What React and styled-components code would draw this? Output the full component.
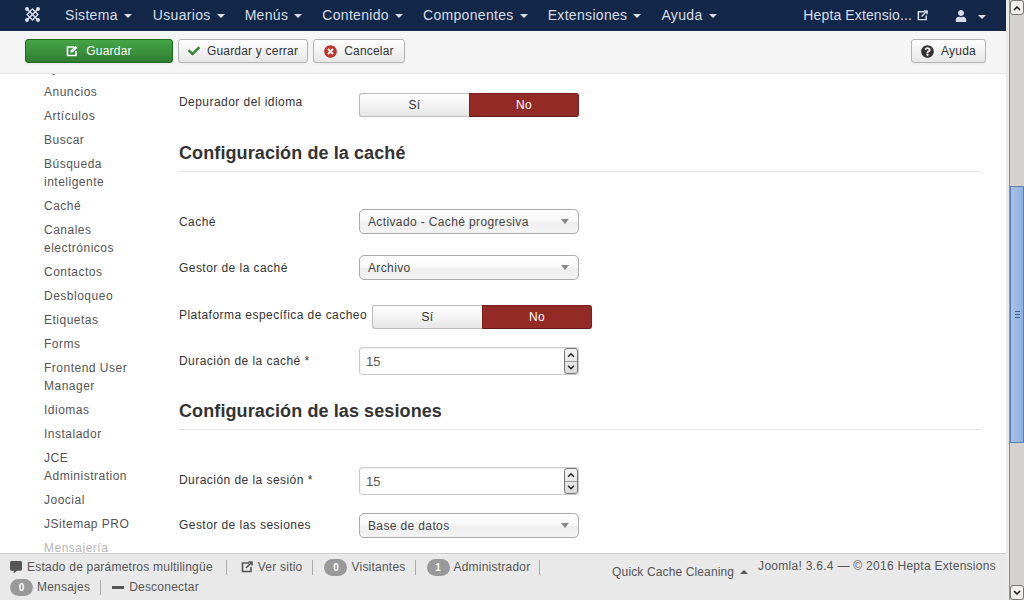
import React from 'react'
import styled, { createGlobalStyle } from 'styled-components'
import { FaCheck, FaTimesCircle, FaQuestionCircle, FaUser, FaCommentAlt } from 'react-icons/fa'

const GlobalStyle = createGlobalStyle`
  html, body { margin: 0; padding: 0; height: 100%; overflow: hidden; }
  body { font-family: "Liberation Sans", Arial, sans-serif; font-size: 12px; color: #333; }
`

const Frame = styled.div`
  display: flex;
  width: 1024px;
  height: 600px;
`

const Main = styled.div`
  flex: 1;
  min-width: 0;
  display: flex;
  flex-direction: column;
`

const NavBar = styled.div`
  height: 31px;
  flex: none;
  background: #132849;
  display: flex;
  align-items: center;
  color: #d9dee6;
  font-size: 14px;
  padding-left: 24px;
  padding-right: 20px;
`

const Logo = styled.svg`
  width: 17px;
  height: 17px;
  margin-right: 24px;
  margin-bottom: 3px;
`

const NavItem = styled.div`
  display: flex;
  align-items: center;
  margin-right: 20px;
  white-space: nowrap;
  letter-spacing: 0.32px;
  margin-bottom: 1px;
  &:first-of-type { margin-right: 21px; }
`

const Caret = styled.span`
  display: inline-block;
  width: 0;
  height: 0;
  margin-left: 6px;
  margin-top: 2px;
  border-left: 4px solid transparent;
  border-right: 4px solid transparent;
  border-top: 4px solid #d9dee6;
`

const NavRight = styled.div`
  margin-left: auto;
  display: flex;
  align-items: center;
`

const ExternalItem = styled(NavItem)`
  letter-spacing: 0.12px;
  gap: 5px;
  &:first-of-type { margin-right: 27px; }
`

const UserCaret = styled(Caret)`
  margin-left: 11px;
`

const ToolBar = styled.div`
  height: 43px;
  box-sizing: border-box;
  flex: none;
  background: #f5f5f5;
  border-bottom: 1px solid #e3e3e3;
  display: flex;
  align-items: center;
  padding: 0 20px 2px 25px;
  gap: 5px;
`

const ToolButton = styled.div`
  display: flex;
  align-items: center;
  justify-content: center;
  gap: 7px;
  width: ${p => p.$width}px;
  box-sizing: border-box;
  height: 24px;
  border-radius: 3px;
  font-size: 12px;
  letter-spacing: 0.2px;
  white-space: nowrap;
  color: #333;
  border: 1px solid #b3b3b3;
  background: linear-gradient(#ffffff, #e6e6e6);
  box-shadow: 0 1px 2px rgba(0, 0, 0, 0.05);
  ${p => p.$primary && `
    color: #fff;
    border-color: #1d6a20;
    background: linear-gradient(#46a546, #2f7d32);
  `}
  ${p => p.$right && 'margin-left: auto;'}
`

const Content = styled.div`
  flex: 1;
  min-height: 0;
  overflow: hidden;
  background: #fff;
  display: flex;
`

const SideMenu = styled.ul`
  list-style: none;
  margin: -18px 0 0;
  padding: 0 0 0 44px;
  width: 135px;
  flex: none;
  box-sizing: border-box;
`

const SideItem = styled.li`
  width: 96px;
  padding: 3px 0;
  line-height: 18px;
  font-size: 12px;
  letter-spacing: 0.5px;
  color: ${p => (p.$muted ? '#b5b5b5' : '#555')};
`

const Form = styled.div`
  flex: 1;
  min-width: 0;
  padding: 19px 26px 0 44px;
`

const Row = styled.div`
  display: flex;
  align-items: flex-start;
  min-height: 24px;
  margin-bottom: ${p => p.$gap ?? 22}px;
`

const Label = styled.div`
  width: ${p => p.$width ?? 180}px;
  flex: none;
  font-size: 12px;
  line-height: 18px;
  letter-spacing: 0.45px;
  color: #333;
  white-space: nowrap;
  padding-top: ${p => p.$top ?? 3}px;
`

const Toggle = styled.div`
  display: flex;
  width: 220px;
  height: 24px;
`

const ToggleSide = styled.div`
  width: 110px;
  box-sizing: border-box;
  display: flex;
  align-items: center;
  justify-content: center;
  font-size: 12px;
  letter-spacing: 0.45px;
  ${p => (p.$active
    ? `
    color: #fff;
    background: #942a25;
    border: 1px solid #7a211d;
    border-bottom-color: #5e1815;
    border-radius: 0 3px 3px 0;
  `
    : `
    color: #333;
    background: linear-gradient(#ffffff, #e6e6e6);
    border: 1px solid #bbb;
    border-right: 0;
    border-radius: 3px 0 0 3px;
  `)}
`

const Heading = styled.h3`
  margin: 0 0 37px;
  height: 32px;
  box-sizing: border-box;
  border-bottom: 1px solid #e5e5e5;
  font-size: 18px;
  line-height: 27px;
  font-weight: bold;
  letter-spacing: 0.1px;
  color: #333;
`

const Select = styled.div`
  width: 220px;
  height: 25px;
  box-sizing: border-box;
  border: 1px solid #aaa;
  border-radius: 5px;
  background: linear-gradient(#ffffff 0%, #f8f8f8 50%, #eeeeee 54%, #f4f4f4 100%);
  display: flex;
  align-items: center;
  justify-content: space-between;
  padding: 0 9px 0 8px;
  font-size: 12px;
  letter-spacing: 0.37px;
  color: #444;
`

const SelectArrow = styled.span`
  width: 0;
  height: 0;
  border-left: 4px solid transparent;
  border-right: 4px solid transparent;
  border-top: 5px solid #888;
`

const NumberField = styled.div`
  width: 220px;
  height: 28px;
  box-sizing: border-box;
  border: 1px solid #ccc;
  border-radius: 3px;
  background: #fff;
  box-shadow: inset 0 1px 1px rgba(0, 0, 0, 0.075);
  display: flex;
  align-items: center;
  justify-content: space-between;
  padding-left: 6px;
  font-size: 13px;
  color: #555;
`

const Spinner = styled.div`
  width: 14px;
  height: 26px;
  display: flex;
  flex-direction: column;
  border: 1px solid #777;
  border-radius: 3px;
  box-sizing: border-box;
  background: linear-gradient(#f4f4f4, #dcdcdc);
`

const SpinPart = styled.svg`
  flex: 1;
  width: 100%;
  min-height: 0;
  ${p => p.$top && 'border-bottom: 1px solid #999;'}
`

const Footer = styled.div`
  height: 47px;
  flex: none;
  box-sizing: border-box;
  background: #e9e9e9;
  border-top: 1px solid #cfcfcf;
  display: flex;
  justify-content: space-between;
  font-size: 12px;
  color: #555;
  padding: 0 10px;
`

const StatusLeft = styled.div`
  width: 545px;
  display: flex;
  flex-wrap: wrap;
  align-content: flex-start;
  padding-top: 3px;
  letter-spacing: 0.22px;
`

const StatusItem = styled.div`
  display: flex;
  align-items: center;
  height: 20px;
  gap: ${p => p.$gap ?? 4}px;
  white-space: nowrap;
  margin-right: ${p => p.$space ?? 10}px;
  padding-right: ${p => p.$space ?? 10}px;
  position: relative;
  ${p => !p.$last && `
    &::after {
      content: '';
      position: absolute;
      right: 0;
      top: 3px;
      bottom: 2px;
      width: 1px;
      background: #aaa;
    }
  `}
`

const Badge = styled.span`
  width: 23px;
  height: 17px;
  border-radius: 9px;
  background: #999;
  color: #fff;
  font-size: 10px;
  font-weight: bold;
  letter-spacing: 0;
  display: flex;
  align-items: center;
  justify-content: center;
`

const MinusBar = styled.span`
  width: 12px;
  height: 3px;
  background: #555;
`

const StatusRight = styled.div`
  display: flex;
  align-items: flex-start;
  white-space: nowrap;
`

const QuickCache = styled.div`
  display: flex;
  align-items: center;
  margin-top: 11px;
  margin-right: 10px;
  letter-spacing: 0.13px;
`

const UpCaret = styled.span`
  width: 0;
  height: 0;
  margin-left: 6px;
  border-left: 4px solid transparent;
  border-right: 4px solid transparent;
  border-bottom: 4px solid #555;
`

const Copyright = styled.div`
  margin-top: 5px;
  letter-spacing: 0.28px;
`

const Gutter = styled.div`
  width: 3px;
  flex: none;
  background: #eceae8;
`

const ScrollBar = styled.div`
  width: 15px;
  flex: none;
  display: flex;
  flex-direction: column;
  background: #d4d2cf;
  border-left: 1px solid #8f8f8f;
  box-sizing: border-box;
`

const ScrollCap = styled.div`
  height: 15px;
  flex: none;
  background: #f2f1ef;
  border: 1px solid #777;
  border-radius: 3px;
  box-sizing: border-box;
  display: flex;
  align-items: center;
  justify-content: center;
`

const ScrollTrack = styled.div`
  flex: 1;
  display: flex;
  flex-direction: column;
  padding-top: ${p => p.$offset}px;
`

const ScrollThumb = styled.div`
  height: ${p => p.$size}px;
  box-sizing: border-box;
  border: 1px solid #5b7db1;
  background: linear-gradient(90deg, #a6c3e8, #8fb0dc);
  display: flex;
  flex-direction: column;
  align-items: center;
  justify-content: center;
  gap: 2px;
`

const GripLine = styled.span`
  width: 5px;
  height: 1px;
  background: #3f5f92;
`

const JoomlaLogo = () => (
  <Logo viewBox="0 0 17 17" fill="none" stroke="#d9dee6">
    <path d="M3 3 L14 14 M14 3 L3 14" strokeWidth="1.6" />
    <path d="M8.5 3 L14 8.5 L8.5 14 L3 8.5 Z" strokeWidth="1.3" />
    <circle cx="3" cy="3" r="2" fill="#d9dee6" stroke="none" />
    <circle cx="14" cy="3" r="2" fill="#d9dee6" stroke="none" />
    <circle cx="3" cy="14" r="2" fill="#d9dee6" stroke="none" />
    <circle cx="14" cy="14" r="2" fill="#d9dee6" stroke="none" />
  </Logo>
)

const NewTabIcon = ({ color = '#555', size = 12 }) => (
  <svg width={size} height={size} viewBox="0 0 12 12" fill="none">
    <path d="M8 2 H1.5 V10.5 H10 V6" stroke={color} strokeWidth="1.6" />
    <path d="M5 7 L10 2 M7.5 1 H11 V4.5" stroke={color} strokeWidth="1.6" />
  </svg>
)

const EditIcon = () => (
  <svg width="13" height="12" viewBox="0 0 13 12" fill="none">
    <path d="M8 2 H1.5 V10.5 H10 V6" stroke="#fff" strokeWidth="1.6" />
    <path d="M4.5 5.5 L9.5 0.8 L11.5 2.7 L6.5 7.5 H4.5 Z" fill="#fff" />
  </svg>
)

const sideItems = [
  'Ayudas', 'Anuncios', 'Artículos', 'Buscar', 'Búsqueda inteligente', 'Caché',
  'Canales electrónicos', 'Contactos', 'Desbloqueo', 'Etiquetas', 'Forms',
  'Frontend User Manager', 'Idiomas', 'Instalador', 'JCE Administration',
  'Joocial', 'JSitemap PRO',
]

const navItems = ['Sistema', 'Usuarios', 'Menús', 'Contenido', 'Componentes', 'Extensiones', 'Ayuda']

const Spin = () => (
  <Spinner>
    <SpinPart $top viewBox="0 0 12 12">
      <path d="M3 8 L6 5 L9 8" stroke="#222" strokeWidth="1.5" fill="none" />
    </SpinPart>
    <SpinPart viewBox="0 0 12 12">
      <path d="M3 4 L6 7 L9 4" stroke="#222" strokeWidth="1.5" fill="none" />
    </SpinPart>
  </Spinner>
)

const YesNo = () => (
  <Toggle>
    <ToggleSide>Sí</ToggleSide>
    <ToggleSide $active>No</ToggleSide>
  </Toggle>
)

const ChoiceField = ({ value }) => (
  <Select>
    {value}
    <SelectArrow />
  </Select>
)

const App = () => (
  <Frame>
    <GlobalStyle />
    <Main>
      <NavBar>
        <JoomlaLogo />
        {navItems.map(item => (
          <NavItem key={item}>{item}<Caret /></NavItem>
        ))}
        <NavRight>
          <ExternalItem>
            Hepta Extensio...
            <NewTabIcon color="#d9dee6" size={11} />
          </ExternalItem>
          <FaUser size={12} />
          <UserCaret />
        </NavRight>
      </NavBar>
      <ToolBar>
        <ToolButton $primary $width={148}><EditIcon />Guardar</ToolButton>
        <ToolButton $width={130}><FaCheck size={12} color="#378137" />Guardar y cerrar</ToolButton>
        <ToolButton $width={92}><FaTimesCircle size={13} color="#bd362f" />Cancelar</ToolButton>
        <ToolButton $right $width={75}><FaQuestionCircle size={13} color="#333" />Ayuda</ToolButton>
      </ToolBar>
      <Content>
        <SideMenu>
          {sideItems.map(item => <SideItem key={item}>{item}</SideItem>)}
          <SideItem $muted>Mensajería</SideItem>
        </SideMenu>
        <Form>
          <Row $gap={23}>
            <Label $top={0}>Depurador del idioma</Label>
            <YesNo />
          </Row>
          <Heading>Configuración de la caché</Heading>
          <Row $gap={21}>
            <Label $top={4}>Caché</Label>
            <ChoiceField value="Activado - Caché progresiva" />
          </Row>
          <Row $gap={25}>
            <Label $top={4}>Gestor de la caché</Label>
            <ChoiceField value="Archivo" />
          </Row>
          <Row $gap={18}>
            <Label $width={193} $top={1}>Plataforma específica de cacheo</Label>
            <YesNo />
          </Row>
          <Row $gap={23}>
            <Label $top={5}>Duración de la caché *</Label>
            <NumberField>15<Spin /></NumberField>
          </Row>
          <Heading>Configuración de las sesiones</Heading>
          <Row $gap={18}>
            <Label $top={4}>Duración de la sesión *</Label>
            <NumberField>15<Spin /></NumberField>
          </Row>
          <Row>
            <Label>Gestor de las sesiones</Label>
            <ChoiceField value="Base de datos" />
          </Row>
        </Form>
      </Content>
      <Footer>
        <StatusLeft>
          <StatusItem $gap={5} $space={14}><FaCommentAlt size={12} />Estado de parámetros multilingüe</StatusItem>
          <StatusItem $gap={5} $space={11}><NewTabIcon />Ver sitio</StatusItem>
          <StatusItem $space={10.5}><Badge>0</Badge>Visitantes</StatusItem>
          <StatusItem><Badge>1</Badge>Administrador</StatusItem>
          <StatusItem $space={11}><Badge>0</Badge>Mensajes</StatusItem>
          <StatusItem $last $gap={5}><MinusBar />Desconectar</StatusItem>
        </StatusLeft>
        <StatusRight>
          <QuickCache>Quick Cache Cleaning<UpCaret /></QuickCache>
          <Copyright>Joomla! 3.6.4 — © 2016 Hepta Extensions</Copyright>
        </StatusRight>
      </Footer>
    </Main>
    <Gutter />
    <ScrollBar>
      <ScrollCap>
        <svg width="8" height="6" viewBox="0 0 8 6"><path d="M1 5 L4 2 L7 5" stroke="#111" strokeWidth="1.5" fill="none" /></svg>
      </ScrollCap>
      <ScrollTrack $offset={171}>
        <ScrollThumb $size={257}>
          <GripLine /><GripLine /><GripLine />
        </ScrollThumb>
      </ScrollTrack>
      <ScrollCap>
        <svg width="8" height="6" viewBox="0 0 8 6"><path d="M1 1 L4 4 L7 1" stroke="#111" strokeWidth="1.5" fill="none" /></svg>
      </ScrollCap>
    </ScrollBar>
  </Frame>
)

export default App
